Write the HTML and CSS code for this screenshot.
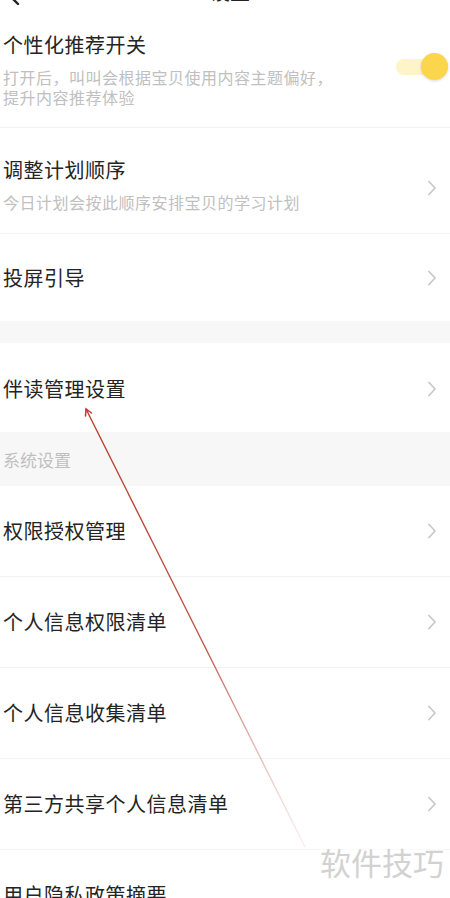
FILE: index.html
```html
<!DOCTYPE html>
<html lang="zh-CN">
<head>
<meta charset="utf-8">
<title>设置</title>
<link rel="stylesheet" href="styles.css">
</head>
<body>
<div class="page">
  <header class="header">
    <svg class="back" width="12" height="20" viewBox="0 0 12 20"><polyline points="10,2 2,10 10,18" fill="none" stroke="#222" stroke-width="2.4" stroke-linecap="round" stroke-linejoin="round"/></svg>
    <span class="header-title">设置</span>
  </header>

  <div class="row row-first">
    <div class="text">
      <div class="title">个性化推荐开关</div>
      <div class="sub">打开后，叫叫会根据宝贝使用内容主题偏好，</div>
      <div class="sub sub-next">提升内容推荐体验</div>
    </div>
    <div class="toggle"><span class="knob"></span></div>
  </div>
  <div class="divider"></div>

  <div class="row row-second">
    <div class="text">
      <div class="title">调整计划顺序</div>
      <div class="sub">今日计划会按此顺序安排宝贝的学习计划</div>
    </div>
    <svg class="chev chev-low" width="10" height="16" viewBox="0 0 10 16"><polyline points="2,1.5 8,8 2,14.5" fill="none" stroke="#c9c9c9" stroke-width="1.8" stroke-linecap="round" stroke-linejoin="round"/></svg>
  </div>
  <div class="divider"></div>

  <div class="row row-third">
    <div class="title">投屏引导</div>
    <svg class="chev" width="10" height="16" viewBox="0 0 10 16"><polyline points="2,1.5 8,8 2,14.5" fill="none" stroke="#c9c9c9" stroke-width="1.8" stroke-linecap="round" stroke-linejoin="round"/></svg>
  </div>

  <div class="gap"></div>

  <div class="row row-fourth">
    <div class="title">伴读管理设置</div>
    <svg class="chev" width="10" height="16" viewBox="0 0 10 16"><polyline points="2,1.5 8,8 2,14.5" fill="none" stroke="#c9c9c9" stroke-width="1.8" stroke-linecap="round" stroke-linejoin="round"/></svg>
  </div>

  <div class="section">系统设置</div>

  <div class="row row-std">
    <div class="title">权限授权管理</div>
    <svg class="chev" width="10" height="16" viewBox="0 0 10 16"><polyline points="2,1.5 8,8 2,14.5" fill="none" stroke="#c9c9c9" stroke-width="1.8" stroke-linecap="round" stroke-linejoin="round"/></svg>
  </div>
  <div class="divider"></div>
  <div class="row row-std">
    <div class="title">个人信息权限清单</div>
    <svg class="chev" width="10" height="16" viewBox="0 0 10 16"><polyline points="2,1.5 8,8 2,14.5" fill="none" stroke="#c9c9c9" stroke-width="1.8" stroke-linecap="round" stroke-linejoin="round"/></svg>
  </div>
  <div class="divider"></div>
  <div class="row row-std">
    <div class="title">个人信息收集清单</div>
    <svg class="chev" width="10" height="16" viewBox="0 0 10 16"><polyline points="2,1.5 8,8 2,14.5" fill="none" stroke="#c9c9c9" stroke-width="1.8" stroke-linecap="round" stroke-linejoin="round"/></svg>
  </div>
  <div class="divider"></div>
  <div class="row row-std">
    <div class="title">第三方共享个人信息清单</div>
    <svg class="chev" width="10" height="16" viewBox="0 0 10 16"><polyline points="2,1.5 8,8 2,14.5" fill="none" stroke="#c9c9c9" stroke-width="1.8" stroke-linecap="round" stroke-linejoin="round"/></svg>
  </div>
  <div class="divider"></div>
  <div class="row row-std">
    <div class="title">用户隐私政策摘要</div>
  </div>

  <svg class="annot" width="450" height="898" viewBox="0 0 450 898">
    <defs>
      <linearGradient id="fade" x1="86" y1="409" x2="305" y2="847" gradientUnits="userSpaceOnUse">
        <stop offset="0" stop-color="#c0392b"/>
        <stop offset="0.55" stop-color="#c4554a"/>
        <stop offset="1" stop-color="#e8c9c4" stop-opacity="0.3"/>
      </linearGradient>
    </defs>
    <line x1="86" y1="409" x2="305" y2="847" stroke="url(#fade)" stroke-width="1.4"/>
    <polyline points="85.5,416 86,409 91.5,413" fill="none" stroke="#c0392b" stroke-width="1.5" stroke-linecap="round"/>
  </svg>

  <div class="watermark">软件技巧</div>
</div>
</body>
</html>
```

FILE: styles.css
```css
* { box-sizing: border-box; }
html, body {
  margin: 0;
  padding: 0;
  background: #ffffff;
}
body {
  font-family: "Noto Sans CJK SC", "Noto Sans", sans-serif;
  color: #222222;
  overflow: hidden;
}
.page {
  position: relative;
  width: 450px;
  height: 898px;
  overflow: hidden;
}
.header {
  height: 40px;
  margin-top: -36px;
  display: flex;
  align-items: flex-end;
  justify-content: center;
  position: relative;
}
.back {
  position: absolute;
  left: 8px;
  bottom: -2px;
}
.header-title {
  font-size: 20px;
  line-height: 24px;
  margin-left: 10px;
  color: #222;
}
.row {
  display: flex;
  align-items: center;
  justify-content: space-between;
  padding-left: 3px;
  padding-right: 13px;
  background: #fff;
}
.title {
  font-size: 20px;
  line-height: 28px;
  letter-spacing: 0.5px;
  color: #242424;
}
.sub {
  margin-top: 8px;
  font-size: 16px;
  line-height: 20px;
  letter-spacing: 0.5px;
  color: #c0c0c0;
}
.sub-next { margin-top: 0; }
.row-first { padding-top: 27px; padding-bottom: 20px; }
.row-second { padding-top: 28px; padding-bottom: 21px; }
.row-third { padding-top: 30px; padding-bottom: 29px; }
.row-fourth { padding-top: 32px; padding-bottom: 29px; }
.row-std { padding-top: 31px; padding-bottom: 31px; }
.divider {
  height: 1px;
  background: #f2f2f2;
}
.gap {
  height: 22px;
  background: #f7f7f8;
}
.section {
  height: 54px;
  background: #f7f7f8;
  padding-left: 3px;
  display: flex;
  align-items: center;
  font-size: 17px;
  color: #bfbfbf;
}
.chev { flex: none; }
.chev-low { margin-top: 8px; }
.toggle {
  position: relative;
  flex: none;
  width: 52px;
  height: 16px;
  border-radius: 8px;
  background: #fdf4c8;
  margin-right: -11px;
  margin-bottom: 4px;
}
.knob {
  position: absolute;
  right: 0;
  top: -6px;
  width: 27px;
  height: 27px;
  border-radius: 50%;
  background: #fbd54b;
  box-shadow: 0 1px 3px rgba(0,0,0,0.15);
}
.annot {
  position: absolute;
  left: 0;
  top: 0;
  pointer-events: none;
}
.watermark {
  position: absolute;
  left: 320px;
  top: 842px;
  font-size: 31px;
  line-height: 40px;
  color: #d2d2d2;
  background: rgba(255,255,255,0.6);
}
```
